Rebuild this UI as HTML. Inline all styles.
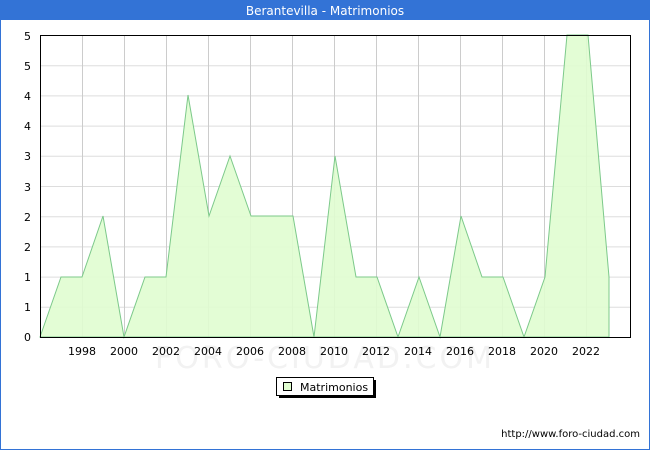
<!DOCTYPE html>
<html><head><meta charset="utf-8"><style>
body{margin:0;width:650px;height:450px;overflow:hidden;background:#fff;font-family:"Liberation Sans","DejaVu Sans",sans-serif}
</style></head><body>
<svg width="650" height="450" xmlns="http://www.w3.org/2000/svg" font-family="DejaVu Sans, Liberation Sans, sans-serif">
<rect x="0.5" y="0.5" width="649" height="449" fill="#fff" stroke="#3373d6"/>
<rect x="0" y="0" width="650" height="20" fill="#3373d6"/>
<text x="325" y="15" fill="#fff" font-size="12" text-anchor="middle">Berantevilla - Matrimonios</text>
<g stroke="#ddd" stroke-width="1">
<line x1="40" x2="630" y1="65.7" y2="65.7"/><line x1="40" x2="630" y1="95.9" y2="95.9"/><line x1="40" x2="630" y1="126.1" y2="126.1"/><line x1="40" x2="630" y1="156.3" y2="156.3"/><line x1="40" x2="630" y1="186.5" y2="186.5"/><line x1="40" x2="630" y1="216.7" y2="216.7"/><line x1="40" x2="630" y1="246.9" y2="246.9"/><line x1="40" x2="630" y1="277.1" y2="277.1"/><line x1="40" x2="630" y1="307.3" y2="307.3"/>
</g>
<g stroke="#ccc" stroke-width="1">
<line x1="82.5" x2="82.5" y1="35" y2="337"/><line x1="124.5" x2="124.5" y1="35" y2="337"/><line x1="166.5" x2="166.5" y1="35" y2="337"/><line x1="208.5" x2="208.5" y1="35" y2="337"/><line x1="250.5" x2="250.5" y1="35" y2="337"/><line x1="292.5" x2="292.5" y1="35" y2="337"/><line x1="334.5" x2="334.5" y1="35" y2="337"/><line x1="376.5" x2="376.5" y1="35" y2="337"/><line x1="418.5" x2="418.5" y1="35" y2="337"/><line x1="460.5" x2="460.5" y1="35" y2="337"/><line x1="502.5" x2="502.5" y1="35" y2="337"/><line x1="544.5" x2="544.5" y1="35" y2="337"/><line x1="586.5" x2="586.5" y1="35" y2="337"/>
</g>
<polygon fill="#e0fdd0" fill-opacity="0.9" stroke="#7cc98a" stroke-width="1" points="40,337 61,277 82,277 103,216 124,337 145,277 166,277 188,95 209,216 230,156 251,216 272,216 293,216 314,337 335,156 356,277 377,277 398,337 419,277 440,337 461,216 482,277 503,277 524,337 545,277 567,35 588,35 609,277 609,337"/>
<text x="325" y="368" font-size="30" fill="#f2f2f2" text-anchor="middle" letter-spacing="3">FORO-CIUDAD.COM</text>
<rect x="40.5" y="35.5" width="590" height="302" fill="none" stroke="#000"/>
<g font-size="11" fill="#000" text-anchor="end">
<text x="31" y="40">5</text><text x="31" y="70">5</text><text x="31" y="100">4</text><text x="31" y="130">4</text><text x="31" y="160">3</text><text x="31" y="191">3</text><text x="31" y="221">2</text><text x="31" y="251">2</text><text x="31" y="281">1</text><text x="31" y="311">1</text><text x="31" y="341">0</text>
</g>
<g font-size="11" fill="#000" text-anchor="middle">
<text x="82" y="355">1998</text><text x="124" y="355">2000</text><text x="166" y="355">2002</text><text x="208" y="355">2004</text><text x="250" y="355">2006</text><text x="292" y="355">2008</text><text x="334" y="355">2010</text><text x="376" y="355">2012</text><text x="418" y="355">2014</text><text x="460" y="355">2016</text><text x="502" y="355">2018</text><text x="544" y="355">2020</text><text x="586" y="355">2022</text>
</g>
<rect x="279" y="380" width="97" height="18" fill="#000"/>
<rect x="276.5" y="377.5" width="97" height="18" fill="#fff" stroke="#000"/>
<rect x="283.5" y="382.5" width="8" height="8" fill="#e0fdd0" stroke="#000"/>
<text x="300" y="391" font-size="11">Matrimonios</text>
<text x="640" y="437" font-size="10" text-anchor="end">http://www.foro-ciudad.com</text>
</svg>
</body></html>
